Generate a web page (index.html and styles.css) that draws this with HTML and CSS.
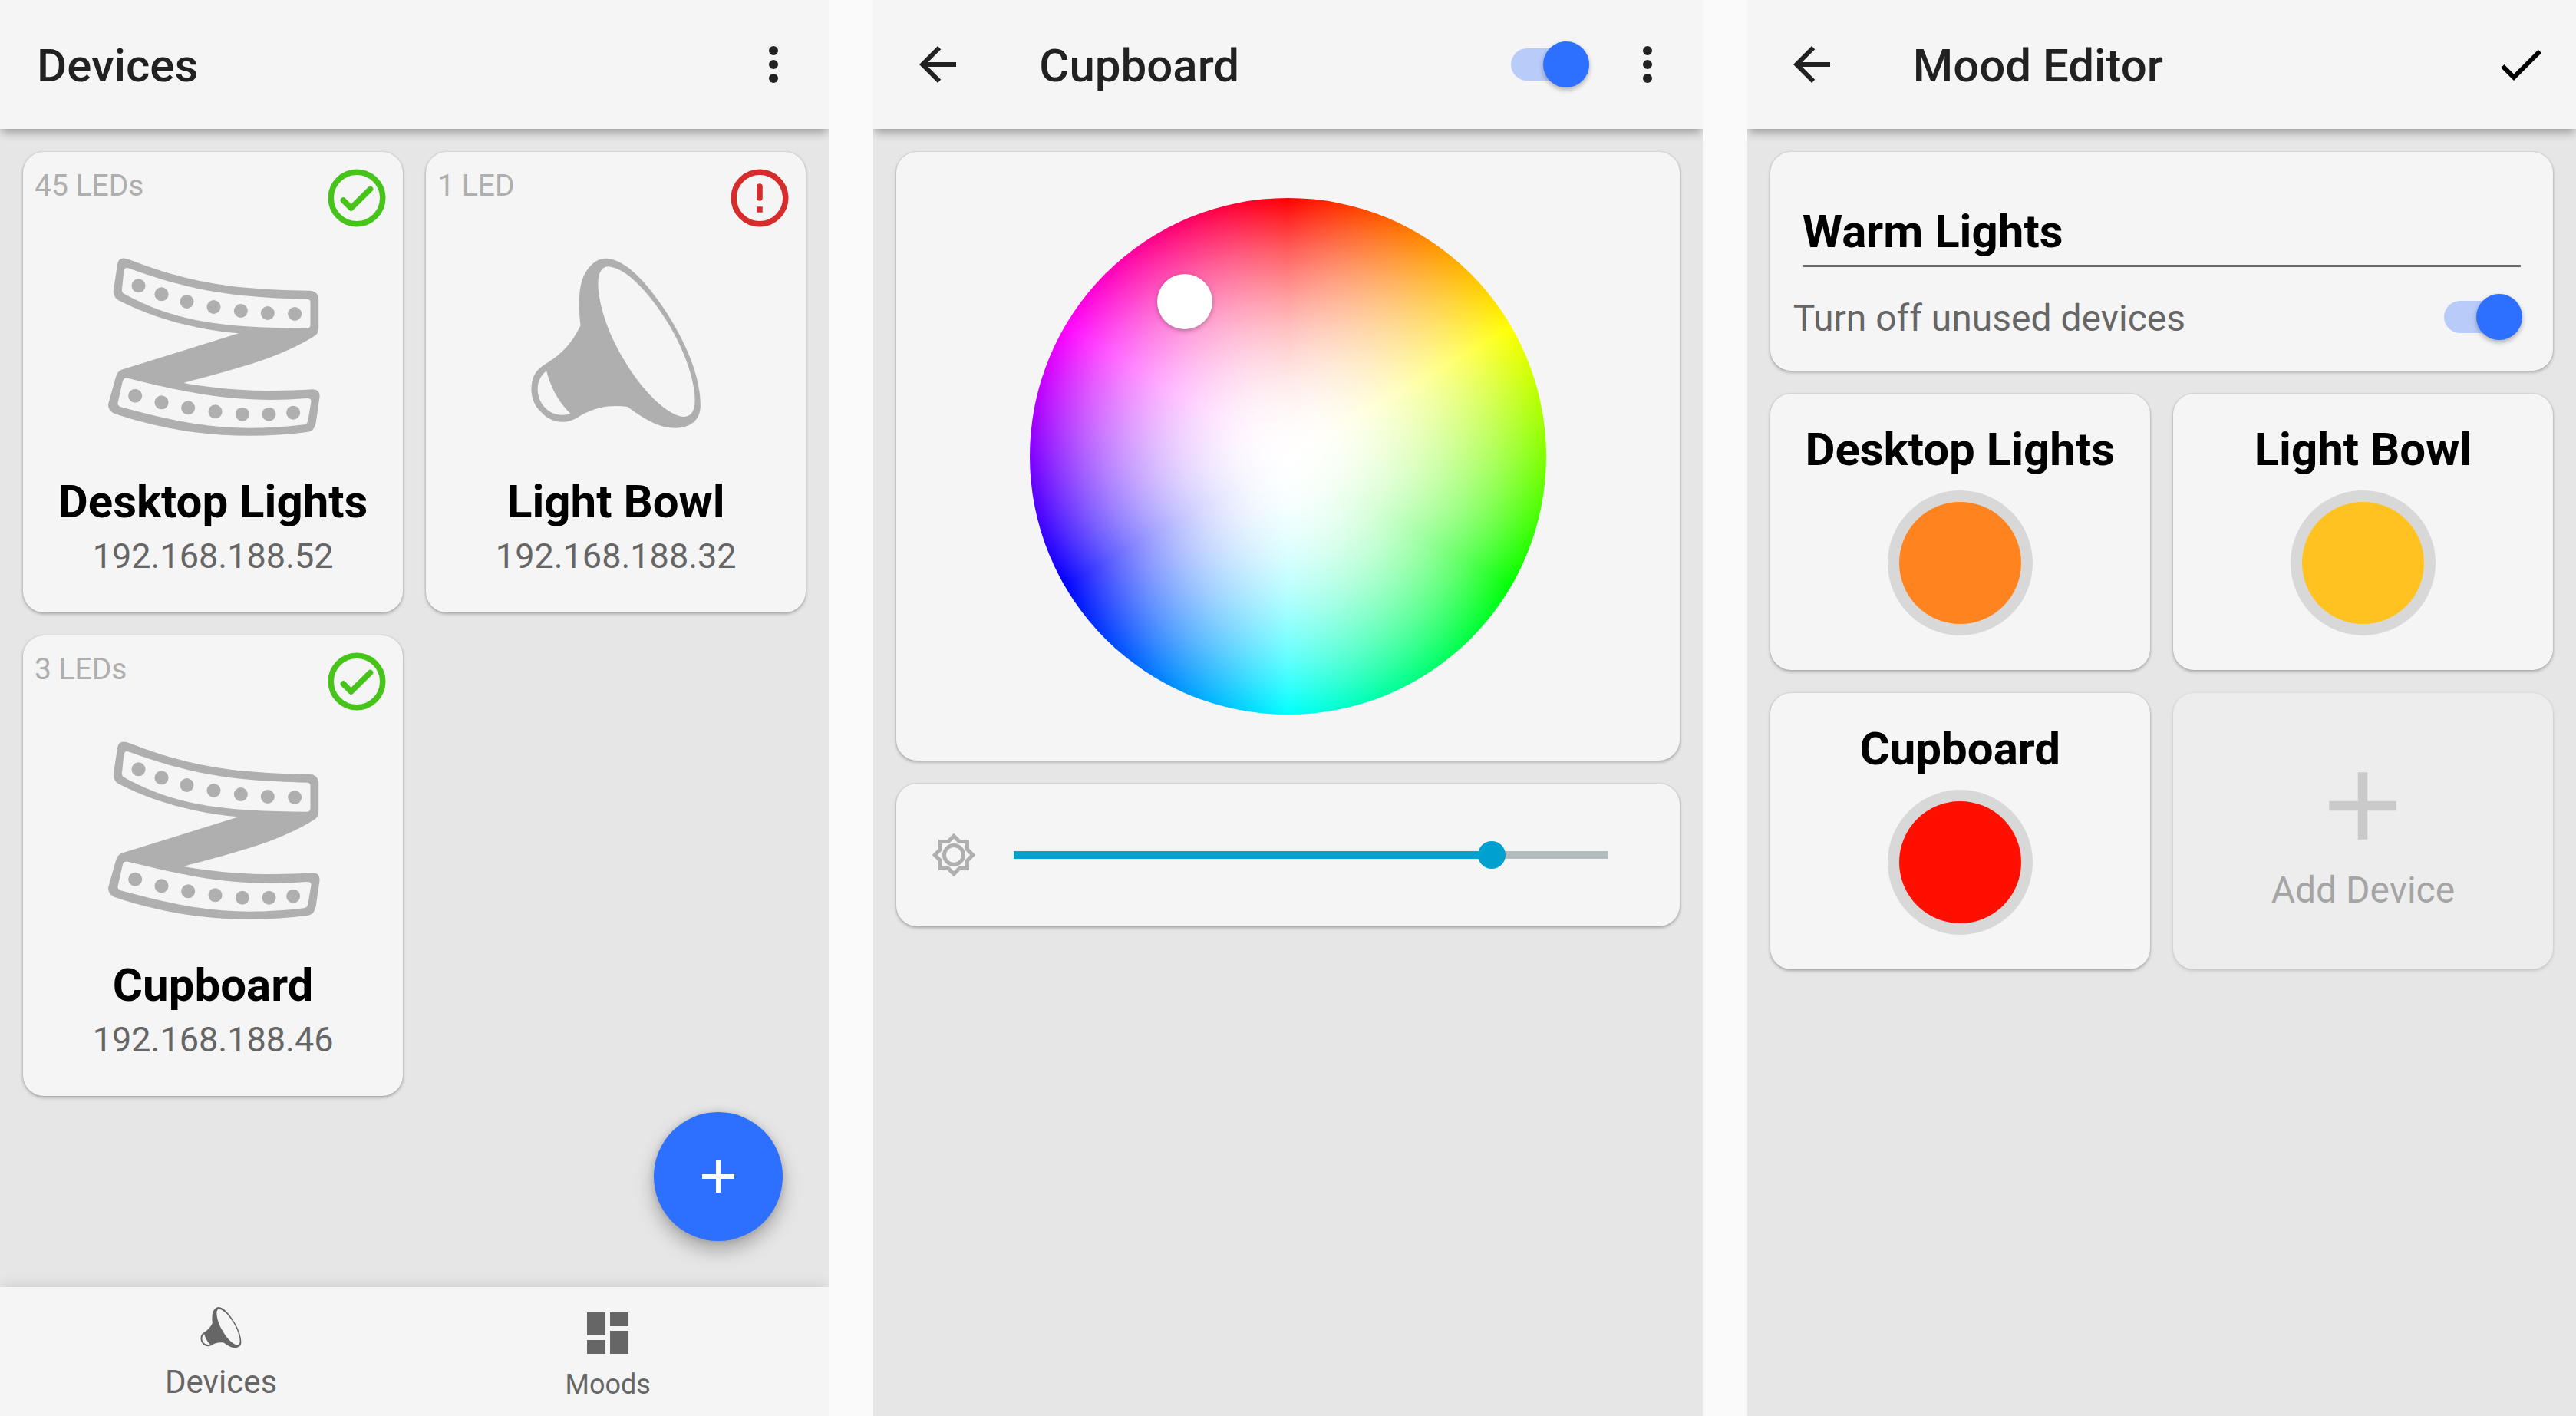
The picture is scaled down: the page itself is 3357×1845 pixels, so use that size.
FILE: index.html
```html
<!DOCTYPE html>
<html lang="en">
<head>
<meta charset="utf-8">
<meta name="viewport" content="width=device-width, initial-scale=1">
<title>Devices</title>
<link rel="stylesheet" href="styles.css">
</head>
<body>
<svg class="defs" aria-hidden="true">
  <symbol id="strip" viewBox="22.5 -21 900 900">
    <path fill-rule="evenodd" d="M136 82C350 165 520 202 848 206Q884 208 884 242V350Q884 374 868 383C720 475 560 510 356 567C520 595 680 604 862 592Q890 593 888 622L874 720Q868 754 845 758C600 790 350 775 85 686Q59 674 62 648L92 542Q98 520 118 514L572 373C400 358 240 315 100 243Q81 230 82 208L98 100Q104 72 136 82Z
      M140 118C340 190 500 232 840 239Q852 240 852 252V342Q850 354 836 353C580 350 350 345 126 220Q115 214 115 204L123 128Q126 114 140 118Z
      M138 548C350 600 560 650 838 627Q856 626 855 640L843 712Q840 728 828 730C560 760 400 740 108 660Q97 655 99 645L118 560Q124 544 138 548Z"/>
    <circle cx="180" cy="187" r="27"/><circle cx="270" cy="220" r="27"/><circle cx="369" cy="249" r="27"/><circle cx="474" cy="270" r="27"/><circle cx="580" cy="285" r="27"/><circle cx="685" cy="294" r="27"/><circle cx="791" cy="297" r="27"/>
    <circle cx="167" cy="617" r="27"/><circle cx="270" cy="643" r="27"/><circle cx="374" cy="664" r="27"/><circle cx="480" cy="679" r="27"/><circle cx="586" cy="689" r="27"/><circle cx="690" cy="689" r="27"/><circle cx="785" cy="683" r="27"/>
  </symbol>
  <symbol id="bowl" viewBox="-22.5 -21 900 900">
    <path fill-rule="evenodd" d="M288 343C278 260 282 190 300 150C318 110 350 80 386 80C450 80 530 150 610 270C700 405 757 540 757 655C757 715 715 743 660 743C600 743 545 715 472 660C400 650 340 663 282 698C225 735 170 720 135 682C100 650 90 605 99 560C106 525 130 505 158 488C215 455 255 410 288 343Z
      M397 112C470 118 560 220 625 325C690 430 735 550 735 635C735 680 718 699 690 699C630 695 530 600 460 480C390 365 357 250 357 180C357 135 372 112 397 112Z
      M155 520C170 580 200 640 250 688C200 700 160 685 135 645C112 605 115 550 155 520Z"/>
  </symbol>
  <symbol id="ok" viewBox="0 0 24 24">
    <g fill="none" stroke="currentColor" stroke-width="2"><circle cx="12" cy="12" r="9"/><path stroke-linecap="round" stroke-linejoin="round" d="M7.3 12.8L10 15.5L16.7 8.9"/></g>
  </symbol>
  <symbol id="alert" viewBox="0 0 24 24">
    <g fill="none" stroke="currentColor" stroke-width="2"><circle cx="12" cy="12" r="9"/><path stroke-linecap="round" d="M12 8V12"/><path d="M12 15V17"/></g>
  </symbol>
  <symbol id="more" viewBox="0 0 24 24"><circle cx="12" cy="6" r="2"/><circle cx="12" cy="12" r="2"/><circle cx="12" cy="18" r="2"/></symbol>
  <symbol id="back" viewBox="0 0 24 24"><path d="M20 11H7.83l5.59-5.59L12 4l-8 8 8 8 1.41-1.41L7.83 13H20v-2z"/></symbol>
  <symbol id="done" viewBox="0 0 24 24"><path d="M9 16.17L4.83 12l-1.42 1.41L9 19 21 7l-1.41-1.41z"/></symbol>
  <symbol id="add" viewBox="0 0 24 24"><path d="M19 13h-6v6h-2v-6H5v-2h6V5h2v6h6v2z"/></symbol>
  <symbol id="dashboard" viewBox="0 0 24 24"><path d="M3 13h8V3H3v10zm0 8h8v-6H3v6zm10 0h8V11h-8v10zm0-18v6h8V3h-8z"/></symbol>
  <symbol id="brightness" viewBox="0 0 24 24">
    <path fill-rule="evenodd" d="M20 8.69V4h-4.69L12 .69 8.69 4H4v4.69L.69 12 4 15.31V20h4.69L12 23.31 15.31 20H20v-4.69L23.31 12zM18 14.48V18h-3.52L12 20.48 9.52 18H6v-3.52L3.52 12 6 9.52V6h3.52L12 3.52 14.48 6H18v3.52L20.48 12z"/>
    <circle cx="12" cy="12" r="5" fill="none" stroke="currentColor" stroke-width="2"/>
  </symbol>
</svg>

<main class="screens">
  <section class="screen" aria-label="Devices">
    <header class="app-bar">
      <h1 class="title">Devices</h1>
      <button class="icon-button" type="button" aria-label="More options"><svg class="icon"><use href="#more"/></svg></button>
    </header>
    <div class="content pair">
      <article class="card device">
        <div class="device-top"><span class="leds">45 LEDs</span><svg class="status status-ok"><use href="#ok"/></svg></div>
        <svg class="device-art"><use href="#strip"/></svg>
        <h2 class="name">Desktop Lights</h2>
        <p class="address">192.168.188.52</p>
      </article>
      <article class="card device">
        <div class="device-top"><span class="leds">1 LED</span><svg class="status status-error"><use href="#alert"/></svg></div>
        <svg class="device-art"><use href="#bowl"/></svg>
        <h2 class="name">Light Bowl</h2>
        <p class="address">192.168.188.32</p>
      </article>
      <article class="card device">
        <div class="device-top"><span class="leds">3 LEDs</span><svg class="status status-ok"><use href="#ok"/></svg></div>
        <svg class="device-art"><use href="#strip"/></svg>
        <h2 class="name">Cupboard</h2>
        <p class="address">192.168.188.46</p>
      </article>
    </div>
    <button class="fab" type="button" aria-label="Add device"><svg class="icon"><use href="#add"/></svg></button>
    <nav class="bottom-nav">
      <a class="nav-item nav-active" href="#devices"><svg class="icon"><use href="#bowl"/></svg><span>Devices</span></a>
      <a class="nav-item" href="#moods"><svg class="icon"><use href="#dashboard"/></svg><span>Moods</span></a>
    </nav>
  </section>

  <section class="screen" aria-label="Cupboard">
    <header class="app-bar">
      <button class="icon-button" type="button" aria-label="Back"><svg class="icon"><use href="#back"/></svg></button>
      <h1 class="title title-inset">Cupboard</h1>
      <input class="switch switch-bar" type="checkbox" checked aria-label="Power">
      <button class="icon-button" type="button" aria-label="More options"><svg class="icon"><use href="#more"/></svg></button>
    </header>
    <div class="content stack">
      <div class="card picker">
        <div class="wheel"><button class="wheel-thumb" type="button" aria-label="Selected color"></button></div>
      </div>
      <div class="card brightness">
        <svg class="brightness-icon"><use href="#brightness"/></svg>
        <input class="slider" type="range" min="0" max="255" value="209" aria-label="Brightness">
      </div>
    </div>
  </section>

  <section class="screen" aria-label="Mood Editor">
    <header class="app-bar">
      <button class="icon-button" type="button" aria-label="Back"><svg class="icon"><use href="#back"/></svg></button>
      <h1 class="title title-inset">Mood Editor</h1>
      <button class="icon-button save" type="button" aria-label="Save"><svg class="icon"><use href="#done"/></svg></button>
    </header>
    <div class="content stack">
      <div class="card settings">
        <input class="mood-name" type="text" value="Warm Lights" aria-label="Mood name">
        <div class="setting">
          <label class="setting-label" for="unused">Turn off unused devices</label>
          <input class="switch" id="unused" type="checkbox" checked>
        </div>
      </div>
      <div class="pair">
        <article class="card mood">
          <h2 class="name">Desktop Lights</h2>
          <button class="swatch orange" type="button" aria-label="Desktop Lights color"></button>
        </article>
        <article class="card mood">
          <h2 class="name">Light Bowl</h2>
          <button class="swatch yellow" type="button" aria-label="Light Bowl color"></button>
        </article>
        <article class="card mood">
          <h2 class="name">Cupboard</h2>
          <button class="swatch red" type="button" aria-label="Cupboard color"></button>
        </article>
        <button class="card add-device" type="button"><svg class="add-icon"><use href="#add"/></svg><span>Add Device</span></button>
      </div>
    </div>
  </section>
</main>
</body>
</html>
```
FILE: styles.css
```css
*,
*::before,
*::after {
  box-sizing: border-box;
}

body {
  margin: 0;
  background: #fafafa;
  color: #000;
  font-family: Roboto, "Liberation Sans", sans-serif;
}

h1,
h2,
p {
  margin: 0;
}

button {
  padding: 0;
  border: 0;
  background: none;
  color: inherit;
  font: inherit;
}

svg {
  display: block;
  fill: currentColor;
}

.defs {
  position: absolute;
  width: 0;
  height: 0;
}

.screens {
  display: grid;
  grid-template-columns: repeat(3, 1fr);
  gap: 58px;
  min-height: 100vh;
}

.screen {
  position: relative;
  display: flex;
  flex-direction: column;
  overflow: hidden;
  background: #e6e6e6;
}

/* App bar */
.app-bar {
  position: relative;
  display: flex;
  align-items: center;
  padding: 48px 36px 48px 48px;
  background: #f5f5f5;
  box-shadow: 0 6px 12px -2px rgba(0, 0, 0, 0.36);
  color: #212121;
}

.title {
  flex: 1;
  height: 72px;
  padding-top: 2px;
  font-size: 60px;
  font-weight: 500;
  line-height: 72px;
}

.title-inset {
  padding-left: 96px;
}

.icon,
.icon-button {
  width: 72px;
  height: 72px;
}

.save {
  color: #000;
}

/* Cards */
.content {
  flex: 1;
  padding: 30px;
}

.pair {
  display: grid;
  grid-template-columns: 1fr 1fr;
  align-content: start;
  gap: 30px;
}

.stack {
  display: flex;
  flex-direction: column;
  gap: 30px;
}

.card {
  border-radius: 27px;
  background: #f5f5f5;
  box-shadow: 0 2px 4px rgba(0, 0, 0, 0.28), 0 0 2px rgba(0, 0, 0, 0.14);
}

.name {
  font-size: 60px;
  font-weight: 700;
  line-height: 72px;
  text-align: center;
}

.device {
  display: flex;
  flex-direction: column;
  align-items: center;
  padding: 15px 15px 46px;
}

.device-top {
  display: flex;
  justify-content: space-between;
  align-self: stretch;
}

.leds {
  padding-top: 5px;
  color: #afafaf;
  font-size: 39px;
  line-height: 48px;
}

.status {
  width: 90px;
  height: 90px;
}

.status-ok {
  color: #47c41a;
}

.status-error {
  color: #d62c2c;
}

.device-art {
  width: 300px;
  height: 300px;
  margin-bottom: 15px;
  color: #afafaf;
}

.address {
  margin-top: 8px;
  color: #666;
  font-size: 45px;
  line-height: 54px;
}

.fab {
  position: absolute;
  right: 60px;
  bottom: 228px;
  display: grid;
  place-items: center;
  width: 168px;
  height: 168px;
  border-radius: 50%;
  background: #2d70ff;
  box-shadow: 0 12px 24px rgba(0, 0, 0, 0.28), 0 0 9px rgba(0, 0, 0, 0.14);
  color: #fff;
}

/* Bottom navigation */
.bottom-nav {
  display: grid;
  grid-template-columns: 1fr 1fr;
  height: 168px;
  padding: 0 36px;
  background: #f5f5f5;
  box-shadow: 0 0 18px rgba(0, 0, 0, 0.13);
}

.nav-item {
  display: flex;
  flex-direction: column;
  align-items: center;
  justify-content: flex-end;
  gap: 10px;
  padding-bottom: 20px;
  color: #666;
  font-size: 36px;
  line-height: 42px;
  text-decoration: none;
}

.nav-active {
  font-size: 42px;
  line-height: 48px;
}

/* Switch */
.switch {
  display: grid;
  align-items: center;
  width: 102px;
  height: 60px;
  margin: 0;
  appearance: none;
}

.switch::before,
.switch::after {
  content: "";
  grid-area: 1 / 1;
}

.switch::before {
  height: 42px;
  border-radius: 21px;
  background: #b9ccf9;
}

.switch::after {
  justify-self: end;
  width: 60px;
  height: 60px;
  border-radius: 50%;
  background: #2d70ff;
  box-shadow: 0 3px 6px rgba(0, 0, 0, 0.3);
}

.switch-bar {
  margin-right: 40px;
}

/* Color picker: saturation falls off with the square of the radius */
.picker {
  display: flex;
  justify-content: center;
  padding: 60px;
}

.wheel {
  position: relative;
  width: 100%;
  max-width: 673px;
  aspect-ratio: 1;
  border-radius: 50%;
  background: radial-gradient(
      closest-side,
      rgba(255, 255, 255, 1) 0%,
      rgba(255, 255, 255, 0.99) 10%,
      rgba(255, 255, 255, 0.96) 20%,
      rgba(255, 255, 255, 0.91) 30%,
      rgba(255, 255, 255, 0.84) 40%,
      rgba(255, 255, 255, 0.75) 50%,
      rgba(255, 255, 255, 0.64) 60%,
      rgba(255, 255, 255, 0.51) 70%,
      rgba(255, 255, 255, 0.36) 80%,
      rgba(255, 255, 255, 0.19) 90%,
      rgba(255, 255, 255, 0) 100%
    ),
    conic-gradient(#f00, #ff0, #0f0, #0ff, #00f, #f0f, #f00);
}

.wheel-thumb {
  position: absolute;
  top: 20%;
  left: 30%;
  width: 72px;
  height: 72px;
  border-radius: 50%;
  background: #fff;
  box-shadow: 0 2px 6px rgba(0, 0, 0, 0.3);
  transform: translate(-50%, -50%);
}

.brightness {
  display: flex;
  align-items: center;
  gap: 48px;
  padding: 63px 93px 63px 45px;
}

.brightness-icon {
  width: 60px;
  height: 60px;
  color: #afafaf;
}

.slider {
  flex: 1;
  height: 36px;
  margin: 0;
  background: linear-gradient(90deg, #00a0d0 81%, #b2bbbe 81%) center / 100% 10px no-repeat;
  appearance: none;
}

.slider::-webkit-slider-thumb {
  width: 36px;
  height: 36px;
  border-radius: 50%;
  background: #00a0d0;
  appearance: none;
}

/* Mood editor */
.settings {
  display: flex;
  flex-direction: column;
  gap: 35px;
  padding: 67px 40px 40px 30px;
}

.mood-name {
  height: 83px;
  margin: 0 2px 0 12px;
  padding: 0 0 8px;
  border: 0;
  border-bottom: 3px solid #666;
  border-radius: 0;
  background: none;
  color: #000;
  font: 700 60px/72px Roboto, "Liberation Sans", sans-serif;
}

.setting {
  display: flex;
  align-items: center;
  justify-content: space-between;
}

.setting-label {
  padding-top: 4px;
  color: #666;
  font-size: 48px;
  line-height: 56px;
}

.mood {
  display: flex;
  flex-direction: column;
  align-items: center;
  gap: 17px;
  padding: 37px 15px 45px;
}

.swatch {
  width: 189px;
  height: 189px;
  border: 15px solid #d8d8d8;
  border-radius: 50%;
}

.orange {
  background: #ff841f;
}

.yellow {
  background: #ffc220;
}

.red {
  background: #ff0f00;
}

.add-device {
  display: flex;
  flex-direction: column;
  align-items: center;
  gap: 7px;
  padding: 72px 15px;
  color: #666;
  font-size: 48px;
  line-height: 56px;
  opacity: 0.5;
}

.add-icon {
  width: 150px;
  height: 150px;
  color: #afafaf;
}
```
